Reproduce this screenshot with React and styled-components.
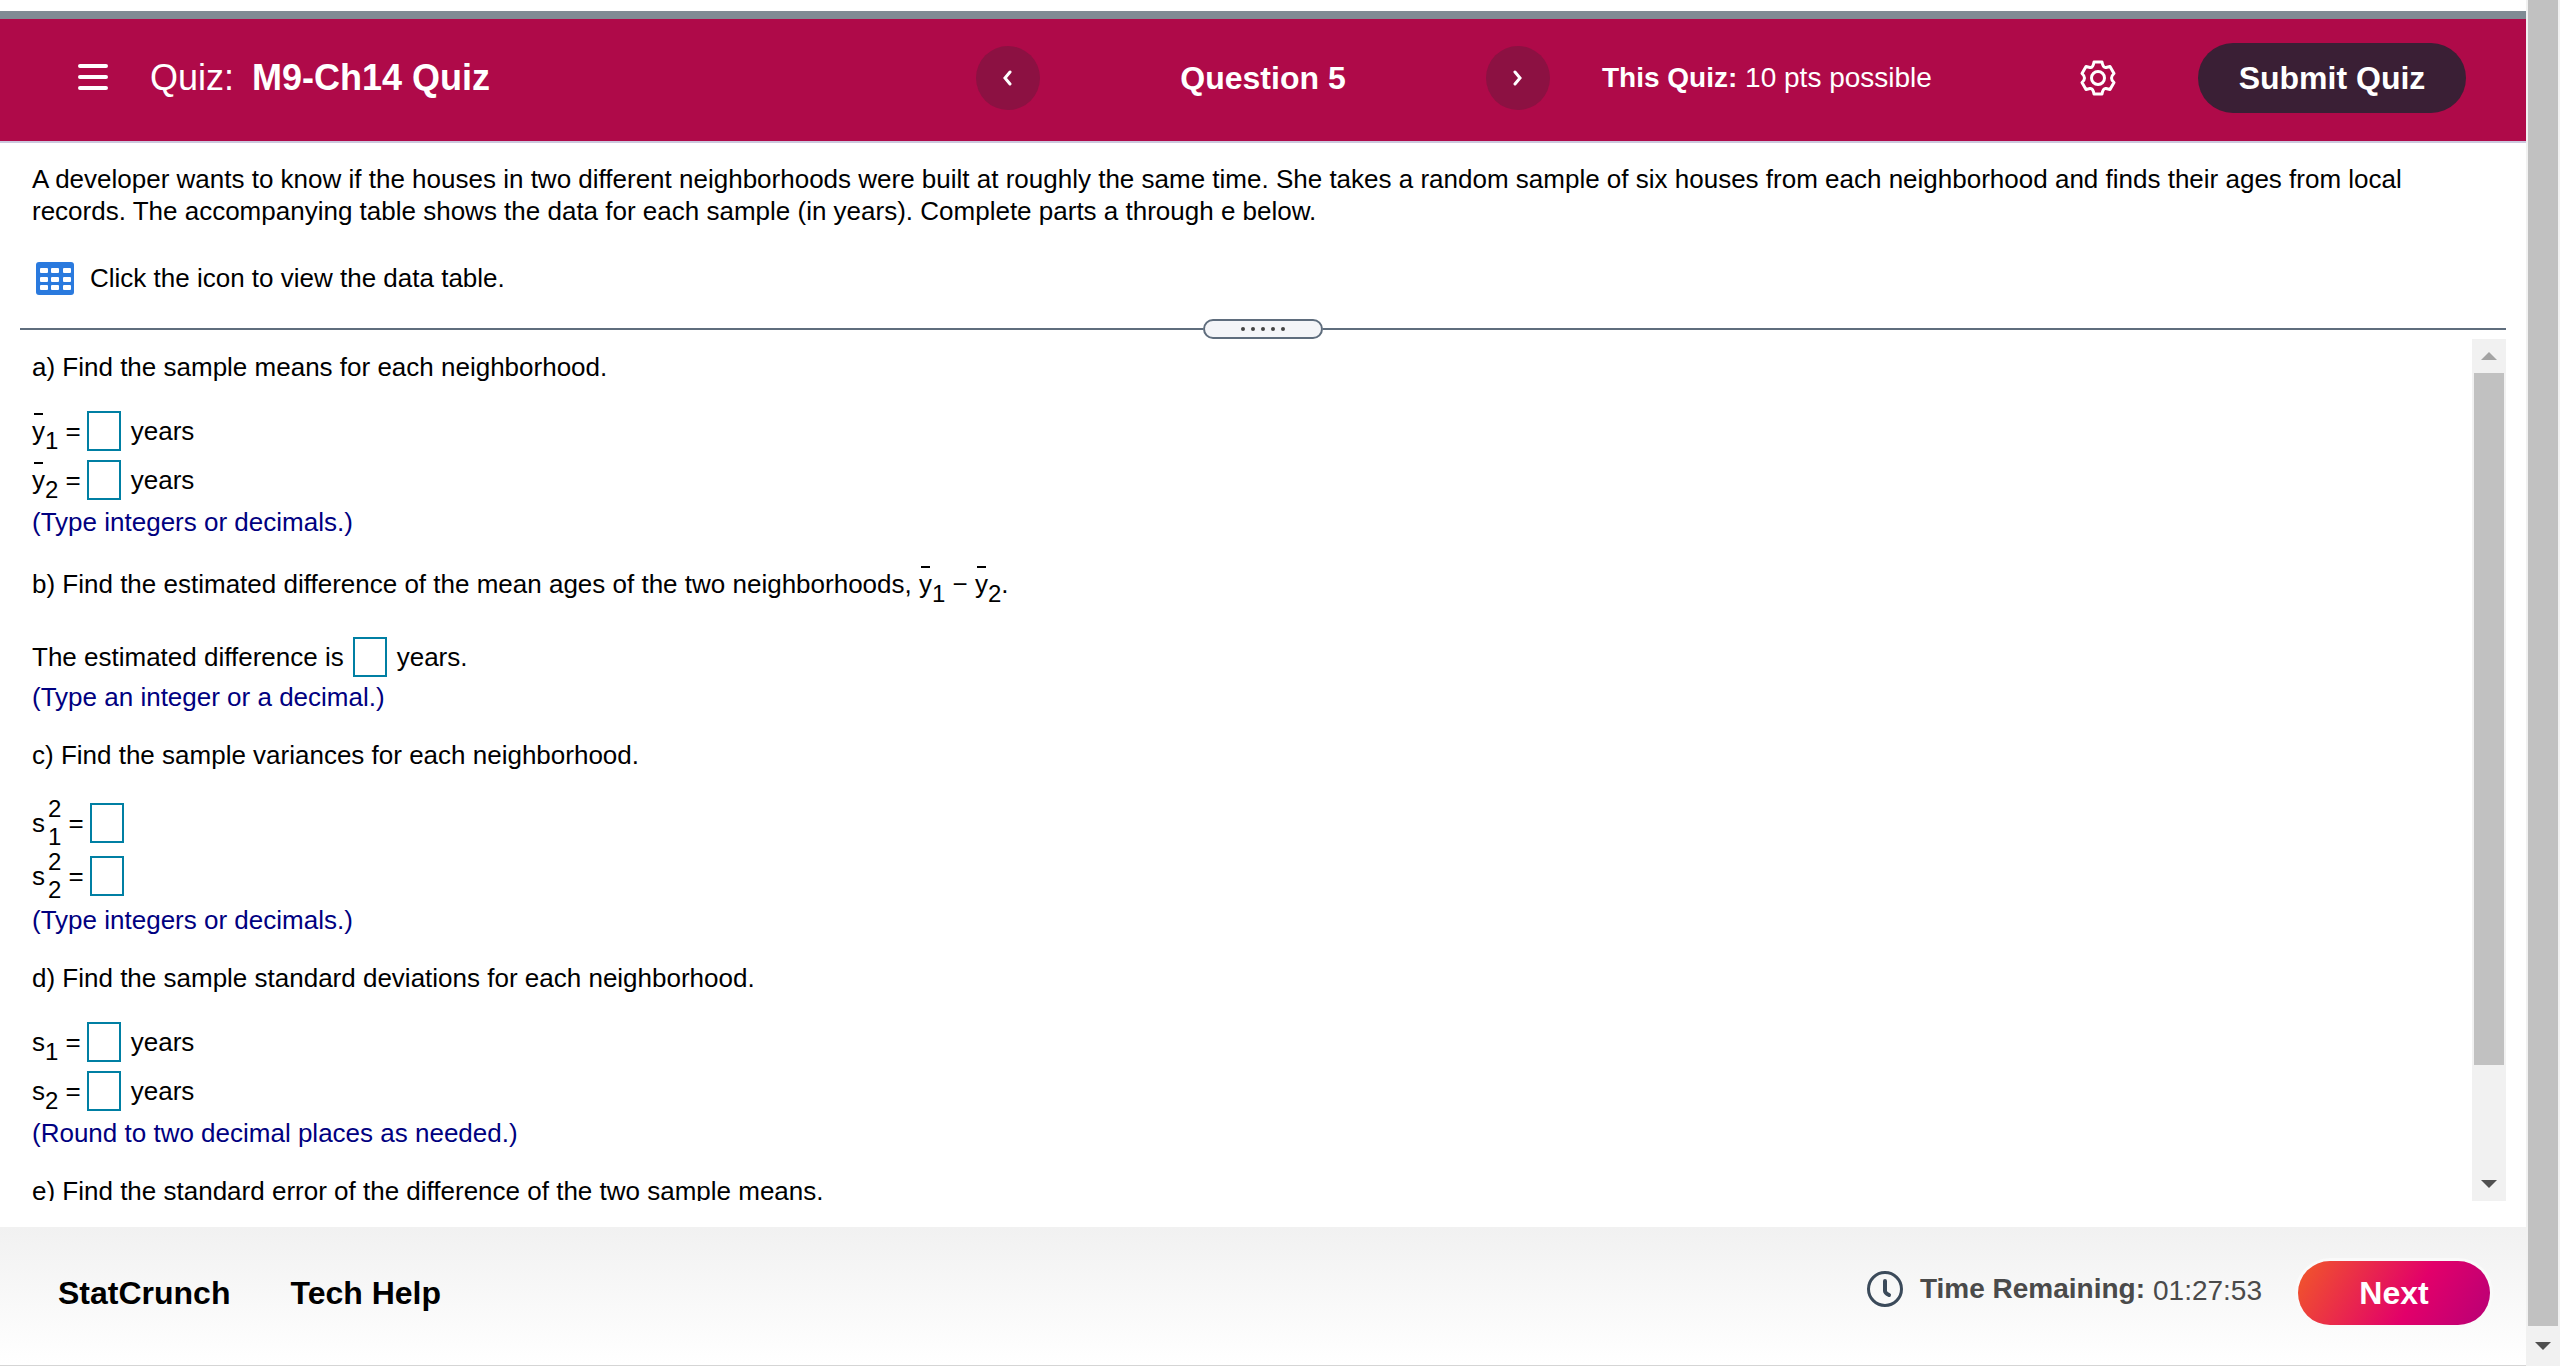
import React from 'react';
import styled, { createGlobalStyle } from 'styled-components';

const GlobalStyle = createGlobalStyle`
  * {
    box-sizing: border-box;
  }

  body {
    margin: 0;
    background: #fff;
    color: #000;
    font-family: "Liberation Sans", Arial, sans-serif;
    font-size: 26px;
    line-height: 32px;
  }

  button,
  input {
    font-family: inherit;
  }
`;

const Page = styled.div`
  display: flex;
  height: 100vh;
  overflow: hidden;
`;

const Main = styled.div`
  flex: 1;
  min-width: 0;
  display: flex;
  flex-direction: column;
  border-top: 11px solid #fff;
  border-bottom: 1px solid #d5d5d5;
`;

const Header = styled.header`
  display: grid;
  grid-template-columns: 1fr 574px 1fr;
  align-items: center;
  flex-shrink: 0;
  height: 132px;
  padding: 0 60px 4px;
  background: #af0a49;
  border-top: 8px solid #808b94;
  border-bottom: 2px solid #ccc8de;
  color: #fff;
`;

const Group = styled.div`
  display: flex;
  align-items: center;
`;

const IconButton = styled.button`
  display: flex;
  padding: 0;
  background: none;
  border: 0;
  color: inherit;
`;

const MenuButton = styled(IconButton)`
  padding: 0 40px 2px 16px;
`;

const Title = styled.h1`
  margin: 0;
  font-size: 36px;
  line-height: 44px;
  font-weight: 400;

  strong {
    margin-left: 8px;
  }
`;

const QuestionNav = styled.nav`
  display: flex;
  align-items: center;
  justify-content: space-between;
`;

const RoundButton = styled(IconButton)`
  align-items: center;
  justify-content: center;
  width: 64px;
  height: 64px;
  border-radius: 50%;
  background: #8c1142;
`;

const QuestionTitle = styled.h2`
  margin: 0;
  font-size: 32px;
  line-height: 40px;
`;

const Points = styled.p`
  flex: 1;
  margin: 0 0 0 52px;
  font-size: 28px;
`;

const SubmitButton = styled.button`
  width: 268px;
  height: 70px;
  margin-left: 82px;
  padding: 0;
  border: 0;
  border-radius: 35px;
  background: #3a1f35;
  color: #fff;
  font-size: 32px;
  font-weight: 700;
`;

const Problem = styled.section`
  flex-shrink: 0;
  padding: 20px 90px 0 32px;
`;

const Text = styled.p`
  margin: 0;
`;

const TableLink = styled.button`
  display: flex;
  align-items: center;
  gap: 16px;
  margin-top: 34px;
  padding: 0 0 0 4px;
  border: 0;
  background: none;
  color: #000;
  font-size: 26px;
  line-height: 32px;
`;

const Splitter = styled.div`
  display: flex;
  align-items: center;
  flex-shrink: 0;
  height: 20px;
  margin: 24px 20px 0;

  &::before,
  &::after {
    content: "";
    flex: 1;
    height: 2px;
    background: #5f6d7d;
  }
`;

const Handle = styled.button`
  display: flex;
  align-items: center;
  justify-content: center;
  gap: 6px;
  width: 120px;
  height: 20px;
  padding: 0;
  border: 2px solid #5f6d7d;
  border-radius: 10px;
  background: #f4f5f8;
`;

const Dot = styled.span`
  width: 4px;
  height: 4px;
  border-radius: 50%;
  background: #444;
`;

const Work = styled.section`
  flex: 1;
  min-height: 0;
  display: flex;
  margin: 0 20px 26px;
`;

const Parts = styled.div`
  flex: 1;
  min-width: 0;
  padding: 12px 12px 0;
  overflow: hidden;
`;

const Answers = styled.div`
  padding-top: ${({ $space }) => $space}px;
`;

const Row = styled.div`
  display: flex;
  align-items: center;
  height: ${({ $height }) => $height || 49}px;
`;

const AnswerInput = styled.input`
  width: 34px;
  height: 40px;
  margin: 0 10px 0 6px;
  padding: 0 4px;
  border: 2px solid #007fa3;
  border-radius: 0;
  background: #fff;
  font-size: 24px;
`;

const Prompt = styled.label`
  padding-right: 3px;
`;

const Hint = styled.p`
  margin: 2px 0 0;
  color: #000080;
`;

const PartTitle = styled.p`
  display: flex;
  margin: ${({ $top }) => $top || 0}px 0 0;
`;

const Symbol = styled.label`
  display: inline-flex;
  align-items: center;
  height: 32px;
  white-space: pre;
`;

const Mean = styled.span`
  position: relative;

  &::before {
    content: "";
    position: absolute;
    top: -2px;
    left: 2px;
    width: 9px;
    height: 2px;
    background: #000;
  }
`;

const Indices = styled.span`
  display: flex;
  flex-direction: column;
  justify-content: space-between;
  height: ${({ $stacked }) => ($stacked ? 52 : 24)}px;
  margin-top: ${({ $stacked }) => ($stacked ? 0 : 20)}px;
  margin-left: ${({ $stacked }) => ($stacked ? 3 : 0)}px;
  font-size: 24px;
  line-height: 24px;
`;

const Footer = styled.footer`
  display: flex;
  align-items: center;
  flex-shrink: 0;
  height: 138px;
  padding: 0 36px 6px 58px;
  background: linear-gradient(#f1f1f1, #fff);
`;

const FooterLink = styled.a`
  margin-right: 60px;
  color: #000;
  font-size: 32px;
  font-weight: 700;
  text-decoration: none;
`;

const Timer = styled.div`
  display: flex;
  align-items: center;
  gap: 8px;
  margin-left: auto;
  padding-bottom: 8px;
  color: #4a4a4a;
  font-size: 28px;

  svg {
    margin-right: 8px;
  }
`;

const TimeLeft = styled.span`
  padding-top: 4px;
`;

const NextButton = styled.button`
  width: 192px;
  height: 64px;
  margin-left: 36px;
  padding: 0;
  border: 0;
  border-radius: 32px;
  background: linear-gradient(120deg, #f0512e 5%, #e2006a 60%, #b80076);
  box-shadow: 0 0 0 3px #fafafa;
  color: #fff;
  font-size: 32px;
  font-weight: 700;
`;

const Track = styled.div`
  display: flex;
  flex-direction: column;
  align-items: center;
  flex-shrink: 0;
  width: 34px;
  background: #f1f1f1;
`;

const Thumb = styled.div`
  flex: ${({ $grow }) => $grow};
  width: 30px;
  background: #c1c1c1;
`;

const TrackEnd = styled.button`
  display: flex;
  align-items: center;
  justify-content: center;
  width: 34px;
  height: ${({ $height }) => $height || 34}px;
  padding: 0;
  border: 0;
  background: none;
`;

const Spacer = styled.div`
  flex: ${({ $grow }) => $grow};
`;

const MenuIcon = () => (
  <svg width="34" height="28" viewBox="0 0 34 28" aria-hidden="true">
    <path d="M4 3h26M4 14h26M4 25h26" stroke="#fff" strokeWidth="4" strokeLinecap="round" />
  </svg>
);

const Chevron = ({ next }) => (
  <svg width="12" height="16" viewBox="0 0 12 16" fill="none" aria-hidden="true">
    <path d={next ? 'M3 2l5 6-5 6' : 'M8 2L3 8l5 6'} stroke="#fff" strokeWidth="3" strokeLinecap="round" />
  </svg>
);

const GearIcon = () => (
  <svg width="36" height="36" viewBox="0 0 36 36" fill="none" stroke="#fff" strokeWidth="3" strokeLinejoin="round" aria-hidden="true">
    <path d="M14 2h8q1 6 4 5.500l4-1 4 7q-5 4.500 0 9l-4 7-4-1q-3-.5-4 5.500h-8q-1-6-4-5.500l-4 1-4-7q5-4.500 0-9l4-7 4 1q3 .5 4-5.500z" />
    <circle cx="18" cy="18" r="6.500" />
  </svg>
);

const TableIcon = () => (
  <svg width="38" height="34" viewBox="0 0 38 34" aria-hidden="true">
    <rect y="1" width="38" height="33" rx="3" fill="#2a7ade" />
    {[7, 16, 24].map((y) =>
      [4, 15, 27].map((x) => (
        <rect key={`${x}-${y}`} x={x} y={y} width="8" height="5" rx="1" fill="#fff" />
      ))
    )}
  </svg>
);

const ClockIcon = () => (
  <svg width="38" height="38" viewBox="0 0 38 38" fill="none" stroke="#3b4a5a" strokeLinecap="round" aria-hidden="true">
    <circle cx="19" cy="19" r="16.500" strokeWidth="3" />
    <path d="M19 11v10q0 2 4 4" strokeWidth="4" />
  </svg>
);

const Arrow = ({ up }) => (
  <svg width="16" height="8" viewBox="0 0 16 8" aria-hidden="true">
    <path d={up ? 'M0 8L8 0l8 8z' : 'M0 0h16L8 8z'} fill={up ? '#a3a3a3' : '#505050'} />
  </svg>
);

const Answer = ({ id, symbol, mean, index, power, unit, height }) => (
  <Row $height={height}>
    <Symbol htmlFor={id}>
      {mean ? <Mean>{symbol}</Mean> : symbol}
      <Indices $stacked={Boolean(power)}>
        {power && <span>{power}</span>}
        <span>{index}</span>
      </Indices>
      {' ='}
    </Symbol>
    <AnswerInput id={id} type="text" />
    {unit}
  </Row>
);

const App = () => {
  return (
    <Page>
      <GlobalStyle />
      <Main>
        <Header>
          <Group>
            <MenuButton aria-label="Menu">
              <MenuIcon />
            </MenuButton>
            <Title>
              Quiz: <strong>M9-Ch14 Quiz</strong>
            </Title>
          </Group>
          <QuestionNav>
            <RoundButton aria-label="Previous question">
              <Chevron />
            </RoundButton>
            <QuestionTitle>Question 5</QuestionTitle>
            <RoundButton aria-label="Next question">
              <Chevron next />
            </RoundButton>
          </QuestionNav>
          <Group>
            <Points>
              <strong>This Quiz:</strong> 10 pts possible
            </Points>
            <IconButton aria-label="Settings">
              <GearIcon />
            </IconButton>
            <SubmitButton>Submit Quiz</SubmitButton>
          </Group>
        </Header>
        <Problem>
          <Text>
            A developer wants to know if the houses in two different neighborhoods were built at roughly the same time. She takes a random sample of six houses from each neighborhood and finds their ages from local records. The accompanying table shows the data for each sample (in years). Complete parts a through e below.
          </Text>
          <TableLink>
            <TableIcon />
            Click the icon to view the data table.
          </TableLink>
        </Problem>
        <Splitter>
          <Handle aria-label="Resize panels">
            <Dot />
            <Dot />
            <Dot />
            <Dot />
            <Dot />
          </Handle>
        </Splitter>
        <Work>
          <Parts>
            <PartTitle>a) Find the sample means for each neighborhood.</PartTitle>
            <Answers $space={23}>
              <Answer id="mean-1" symbol="y" mean index="1" unit="years" />
              <Answer id="mean-2" symbol="y" mean index="2" unit="years" />
            </Answers>
            <Hint>(Type integers or decimals.)</Hint>
            <PartTitle $top={30}>
              b) Find the estimated difference of the mean ages of the two neighborhoods,&nbsp;
              <Symbol as="span">
                <Mean>y</Mean>
                <Indices>1</Indices>
                {' − '}
                <Mean>y</Mean>
                <Indices>2</Indices>.
              </Symbol>
            </PartTitle>
            <Answers $space={34}>
              <Row $height={45}>
                <Prompt htmlFor="difference">The estimated difference is</Prompt>
                <AnswerInput id="difference" type="text" />
                years.
              </Row>
            </Answers>
            <Hint>(Type an integer or a decimal.)</Hint>
            <PartTitle $top={26}>c) Find the sample variances for each neighborhood.</PartTitle>
            <Answers $space={25}>
              <Answer id="variance-1" symbol="s" power="2" index="1" height={53} />
              <Answer id="variance-2" symbol="s" power="2" index="2" height={53} />
            </Answers>
            <Hint>(Type integers or decimals.)</Hint>
            <PartTitle $top={26}>d) Find the sample standard deviations for each neighborhood.</PartTitle>
            <Answers $space={23}>
              <Answer id="deviation-1" symbol="s" index="1" unit="years" />
              <Answer id="deviation-2" symbol="s" index="2" unit="years" />
            </Answers>
            <Hint>(Round to two decimal places as needed.)</Hint>
            <PartTitle $top={26}>e) Find the standard error of the difference of the two sample means.</PartTitle>
          </Parts>
          <Track>
            <TrackEnd aria-label="Scroll up">
              <Arrow up />
            </TrackEnd>
            <Thumb $grow={692} />
            <Spacer $grow={102} />
            <TrackEnd aria-label="Scroll down">
              <Arrow />
            </TrackEnd>
          </Track>
        </Work>
        <Footer>
          <FooterLink href="#statcrunch">StatCrunch</FooterLink>
          <FooterLink href="#tech-help">Tech Help</FooterLink>
          <Timer>
            <ClockIcon />
            <strong>Time Remaining:</strong>
            <TimeLeft>01:27:53</TimeLeft>
          </Timer>
          <NextButton>Next</NextButton>
        </Footer>
      </Main>
      <Track>
        <Thumb $grow={1} />
        <TrackEnd $height={40} aria-label="Scroll page down">
          <Arrow />
        </TrackEnd>
      </Track>
    </Page>
  );
};

export default App;
